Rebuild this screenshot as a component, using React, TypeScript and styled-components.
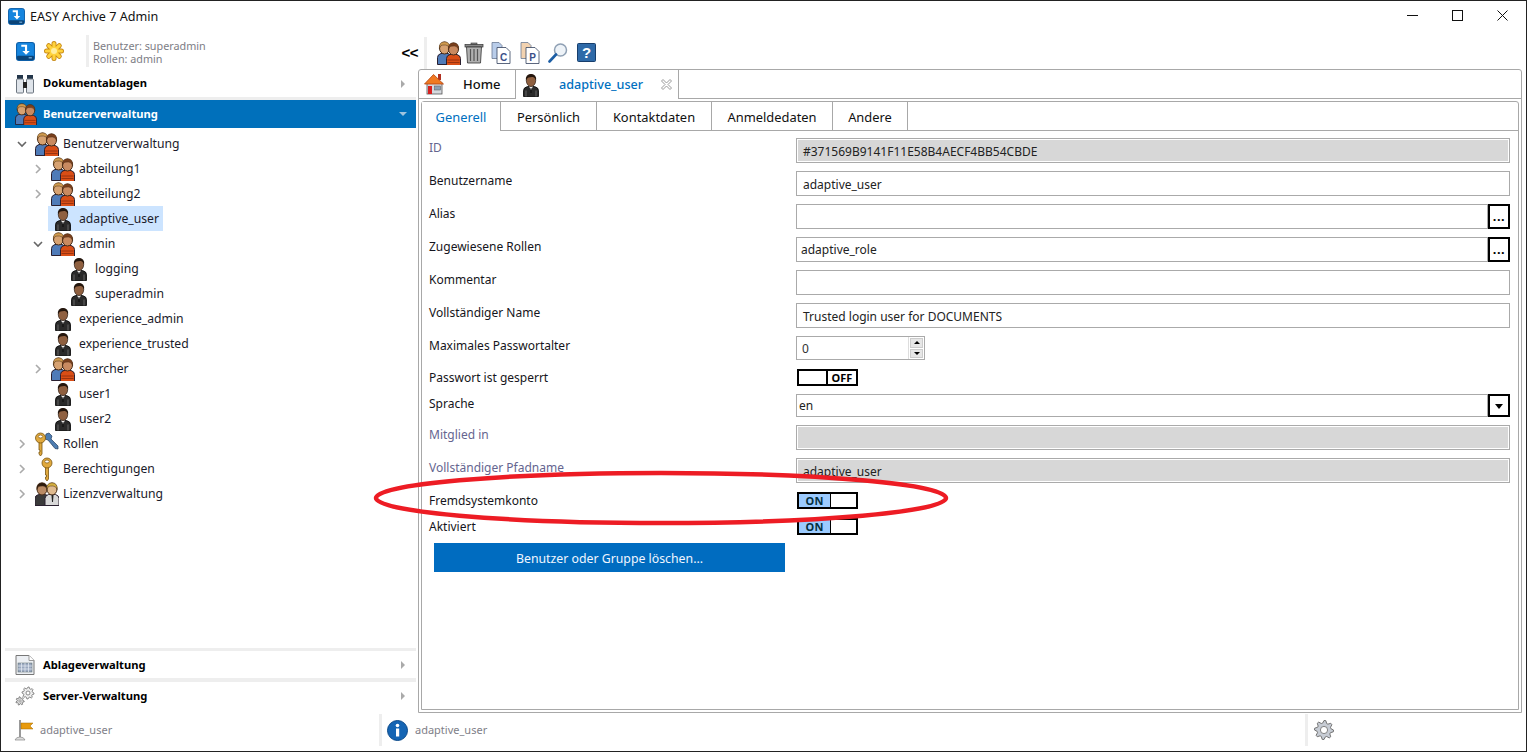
import React from 'react';
import styled, { createGlobalStyle } from 'styled-components';

const Global = createGlobalStyle`
  html, body { margin: 0; padding: 0; background: #fff; }
  body { font-family: "Noto Sans", "Liberation Sans", sans-serif; font-size: 12.5px; color: #000; overflow: hidden; }
  * { box-sizing: border-box; }
`;

const Win = styled.div`
  width: 1527px; height: 752px; display: flex; flex-direction: column;
  border: 1px solid #222; position: relative; background: #fff;
`;
const TitleBar = styled.div`
  height: 31px; display: flex; align-items: center; padding-left: 7px; flex: none;
`;
const TitleText = styled.span`font-size: 12.6px; margin-left: 5px; margin-top: -1px; color: #111;`;
const WinButtons = styled.div`margin-left: auto; display: flex; align-items: center; margin-top: -2px; padding-right: 1px;`;
const WinButton = styled.button`
  width: 45px; height: 24px; border: 0; background: none; padding: 0; display: flex; align-items: center; justify-content: center;
`;
const Content = styled.div`flex: 1; display: flex; min-height: 0;`;
const Sidebar = styled.aside`width: 417px; flex: none; display: flex; flex-direction: column; padding: 0 2px 4px 4px;`;
const SideHeader = styled.div`height: 38px; display: flex; align-items: center; flex: none; padding-left: 11px; margin-right: -2px;`;
const Divider = styled.div`width: 3px; height: 32px; background: #eee; margin: 0 4px 0 22px;`;
const UserInfo = styled.div`font-size: 10.8px; line-height: 13px; color: #7d7d85; padding-top: 1px;`;
const Collapse = styled.span`margin-left: auto; font-weight: 700; font-size: 15px; letter-spacing: -.5px; color: #000; font-family: "Liberation Sans", sans-serif; margin-top: 2px;`;
const Acc = styled.div<{ $active?: boolean; $h: number }>`
  height: ${p => p.$h}px; flex: none; display: flex; align-items: center; padding: 0 7px 0 10px;
  background: ${p => (p.$active ? '#0070bb' : '#fff')};
  color: ${p => (p.$active ? '#fff' : '#000')};
`;
const AccLabel = styled.span<{ $ml?: number; $up?: boolean }>`
  font-weight: 700; font-size: 11.2px; margin-left: ${p => p.$ml ?? 8}px; flex: 1; ${p => p.$up && 'margin-top: -2px;'}
`;
const Gap = styled.div<{ $h: number }>`height: ${p => p.$h}px; background: #eee; flex: none;`;
const TriRight = styled.span`width: 0; height: 0; border-left: 4px solid #aaa; border-top: 4px solid transparent; border-bottom: 4px solid transparent; margin-right: 4px;`;
const TriDown = styled.span`width: 0; height: 0; border-top: 4px solid #9fc4de; border-left: 4px solid transparent; border-right: 4px solid transparent; margin-right: 2px;`;
const Tree = styled.div`flex: 1; padding-top: 3px; margin-left: -4px;`;
const TreeRow = styled.div<{ $level: number }>`
  height: 25px; display: flex; align-items: center; padding-left: ${p => 13 + p.$level * 16}px;
`;
const Toggler = styled.span`width: 18px; flex: none; display: flex; align-items: center; padding-left: 3px;`;
const TreeItem = styled.div<{ $sel?: boolean }>`
  height: 25px; display: flex; align-items: center; gap: 4px; padding: 0 4px 0 3px;
  background: ${p => (p.$sel ? '#cce4ff' : 'transparent')}; color: #1a1a2a; font-size: 12.2px;
`;
const Main = styled.main`flex: 1; min-width: 0; display: flex; flex-direction: column; padding-right: 4px;`;
const Toolbar = styled.div`height: 37px; flex: none; display: flex; align-items: center; padding-left: 6px; padding-top: 4px;`;
const ToolSep = styled.div`width: 3px; height: 32px; background: #eee; margin-right: 9px;`;
const ToolBtn = styled.span<{ $w: number }>`width: ${p => p.$w}px; flex: none; display: flex; justify-content: center;`;
const Outer = styled.div`flex: 1; display: flex; flex-direction: column; border: 1px solid #a8a8a8; border-radius: 3px 3px 0 0; min-height: 0;`;
const OuterTabs = styled.div`height: 29px; display: flex; flex: none; border-bottom: 1px solid #a8a8a8;`;
const OuterTab = styled.div<{ $w: number; $active?: boolean }>`
  width: ${p => p.$w}px; height: ${p => (p.$active ? 29 : 28)}px; display: flex; align-items: center; position: relative;
  border-right: 1px solid #a8a8a8; ${p => p.$active && 'border-left: 1px solid #a8a8a8; background: #fff; margin-left: -1px;'}
  color: ${p => (p.$active ? '#0070c0' : '#111')}; font-size: ${p => (p.$active ? 12.6 : 13)}px;
`;
const TabIcon = styled.span<{ $l: number; $w: number }>`margin-left: ${p => p.$l}px; width: ${p => p.$w}px; display: flex; justify-content: center; flex: none;`;
const TabText = styled.span<{ $l: number }>`margin-left: ${p => p.$l}px; font-weight: 500;`;
const CloseMark = styled.span`position: absolute; right: 6px; top: 9px; line-height: 0;`;
const Inner = styled.div`flex: 1; margin: 2px; border: 1px solid #a8a8a8; border-radius: 3px 3px 0 0; display: flex; flex-direction: column; min-height: 0;`;
const InnerTabs = styled.div`height: 29px; display: flex; flex: none; border-bottom: 1px solid #a8a8a8;`;
const InnerTab = styled.div<{ $w: number; $active?: boolean }>`
  width: ${p => p.$w}px; height: ${p => (p.$active ? 29 : 28)}px; display: flex; align-items: center; justify-content: center;
  border-right: 1px solid #a8a8a8; background: #fff; font-size: 12.9px; padding-top: 1px;
  color: ${p => (p.$active ? '#0070c0' : '#111')};
`;
const Form = styled.div`padding: 7px 8px 0 7px; display: flex; flex-direction: column;`;
const Row = styled.div<{ $h: number }>`height: ${p => p.$h}px; display: flex; flex: none;`;
const Label = styled.div<{ $muted?: boolean; $flush?: boolean }>`
  width: 367px; flex: none; font-size: 12px; line-height: 18px; padding-top: ${p => (p.$flush ? 0 : 1)}px; color: ${p => (p.$muted ? '#65658f' : '#151520')};
`;
const Field = styled.div<{ $disabled?: boolean; $pad?: number; $dy?: number }>`
  flex: 1; height: 25px; display: flex; align-items: center; border: 1px solid #aaa;
  padding: ${p => Math.max(p.$dy ?? 2, 0)}px 0 ${p => Math.max(-(p.$dy ?? 2), 0)}px ${p => p.$pad ?? 6}px;
  font-size: 12px; color: #222; background: ${p => (p.$disabled ? '#d7d7d7' : '#fff')};
  ${p => p.$disabled && 'box-shadow: inset 0 0 0 1px #fff;'}
`;
const Dots = styled.button`
  width: 22px; height: 25px; flex: none; border: 2px solid #000; background: #fff; padding: 0; font: 700 13px "Liberation Sans", sans-serif; color: #000; line-height: 1; letter-spacing: .5px;
`;
const SelectField = styled(Field)`height: 23px;`;
const SelectBtn = styled.button`
  width: 22px; height: 23px; flex: none; border: 2px solid #000; background: #fff; padding: 0; display: flex; align-items: center; justify-content: center;
`;
const TriBlack = styled.span`width: 0; height: 0; border-top: 5px solid #000; border-left: 4px solid transparent; border-right: 4px solid transparent; margin-top: 1px;`;
const Spinner = styled.div`width: 129px; height: 24px; border: 1px solid #aaa; display: flex; font-size: 12px;`;
const SpinValue = styled.div`flex: 1; padding-left: 5px; display: flex; align-items: center; color: #333;`;
const SpinBtns = styled.div`width: 16px; display: flex; flex-direction: column; gap: 1px; padding: 1px; background: #fff; border-left: 1px solid #ddd;`;
const SpinBtn = styled.div<{ $up?: boolean }>`
  flex: 1; background: #e6e6e6; border: 1px solid #ccc; display: flex; align-items: center; justify-content: center;
  &::after { content: ''; width: 0; height: 0; border-left: 3px solid transparent; border-right: 3px solid transparent;
    ${p => (p.$up ? 'border-bottom: 3px solid #000;' : 'border-top: 3px solid #000;')} }
`;
const Toggle = styled.div`width: 61px; height: 17px; border: 2px solid #000; display: flex; margin-left: 1px; font: 700 11px/13px "Noto Sans", sans-serif;`;
const ToggleOn = styled.span`width: 32px; background: #9ccbff; border-right: 1px solid #000; text-align: center; color: #04303f; letter-spacing: .3px;`;
const ToggleOff = styled.span`flex: 1; text-align: center;`;
const ToggleBlank = styled.span`width: 29px; border-right: 2px solid #000;`;
const DangerButton = styled.button`
  width: 351px; height: 29px; margin-left: 5px; border: 0; background: #006cc0; color: #f0f6ff; font: 12.3px "Noto Sans", sans-serif; padding: 1px 0 0;
`;
const Status = styled.footer`height: 38px; flex: none; display: flex; align-items: center; font-size: 11px; color: #808088; padding-bottom: 4px;`;
const StatusCell = styled.div<{ $w?: number; $pl: number }>`
  ${p => (p.$w ? `width: ${p.$w}px; flex: none;` : 'flex: 1;')} display: flex; align-items: center; gap: 7px; padding-left: ${p => p.$pl}px;
`;
const StatusText = styled.span`margin-top: -2px;`;
const StatusSep = styled.div`width: 3px; height: 32px; background: #eee; flex: none;`;
const Overlay = styled.svg`position: absolute; left: -1px; top: -1px; pointer-events: none;`;
const Spacer = styled.span`width: 9px; flex: none;`;

type IP = { s?: number };
const gearPath = (cx: number, cy: number, r1: number, r2: number, n: number) => {
  const pts: string[] = [];
  for (let i = 0; i < n * 4; i++) {
    const a = (i / (n * 4)) * Math.PI * 2;
    const r = i % 4 < 2 ? r2 : r1;
    pts.push(`${(cx + r * Math.cos(a)).toFixed(2)} ${(cy + r * Math.sin(a)).toFixed(2)}`);
  }
  return 'M' + pts.join('L') + 'Z';
};

const Logo = ({ s = 18 }: IP) => (
  <svg width={s} height={s} viewBox="0 0 18 18">
    <rect x=".5" y=".5" width="17" height="17" rx="2.5" fill="#1685de" stroke="#0d5fa8" />
    <rect x="1" y="13" width="16" height="4" rx="1" fill="#0b4478" />
    <rect x="12" y="14.5" width="3" height="1" fill="#8fc4ee" />
    <path d="M5 3.5h4.5v6" fill="none" stroke="#fff" strokeWidth="2" />
    <path d="M6 8.5h7l-3.5 3.6z" fill="#fff" />
  </svg>
);
const Star = () => (
  <svg width="20" height="20" viewBox="0 0 20 20">
    <g stroke="#c98a14" strokeWidth="5" strokeLinecap="round">
      <path d="M10 2.5v15M2.5 10h15M4.7 4.7l10.6 10.6M15.3 4.7L4.7 15.3" />
    </g>
    <g stroke="#ffd23c" strokeWidth="3.2" strokeLinecap="round">
      <path d="M10 2.5v15M2.5 10h15M4.7 4.7l10.6 10.6M15.3 4.7L4.7 15.3" />
    </g>
    <circle cx="10" cy="10" r="3" fill="#ffeea0" />
  </svg>
);
const Binoculars = () => (
  <svg width="20" height="20" viewBox="0 0 20 20">
    <rect x="2" y="1" width="6" height="4" fill="#23364a" />
    <rect x="12" y="1" width="6" height="4" fill="#23364a" />
    <rect x="1.5" y="5" width="7" height="14" rx="1" fill="#dfe4ea" stroke="#6d7680" />
    <rect x="11.5" y="5" width="7" height="14" rx="1" fill="#dfe4ea" stroke="#6d7680" />
    <rect x="8" y="8" width="4" height="6" fill="#222" />
  </svg>
);
const Man = ({ x, y, hair, face, body, k = 1 }: { x: number; y: number; hair: string; face: string; body: string; k?: number }) => (
  <g transform={`translate(${x} ${y}) scale(${k})`}>
    <path d="M-.5 23v-7q0-3 3.5-4h7q3.5 1 3.5 4v7z" fill={body} stroke="#2a2030" strokeWidth="1" />
    <ellipse cx="6.5" cy="6.5" rx="5" ry="6" fill={face} stroke="#4a2e18" strokeWidth="1" />
    <path d="M1.4 7Q.8 .3 6.5 .3T11.6 7Q10.6 3.6 7.5 3.5T3 4z" fill={hair} stroke="#4a2e18" strokeWidth=".5" />
  </g>
);
const Group = ({ s = 24 }: IP) => (
  <svg width={s} height={s} viewBox="0 0 24 24">
    <Man x={1} y={0.5} hair="#cf9a4e" face="#d7a271" body="#4f7bb8" />
    <Man x={10} y={1.5} hair="#7a3f1c" face="#c98a60" body="#d94e16" k={1} />
    <path d="M10.5 19h12M10.5 21.5h12" stroke="#8c2c0c" strokeWidth=".8" />
  </svg>
);
const UserIcon = ({ s = 24 }: IP) => (
  <svg width={s} height={s} viewBox="0 0 24 24">
    <path d="M4.5 23.5v-6q0-3 4-4h7q4 1 4 4v6z" fill="#2a2a2a" stroke="#000" strokeWidth=".8" />
    <path d="M10 13.2l2 4 2-4z" fill="#eee" />
    <path d="M11.6 15h.8v5h-.8z" fill="#000" />
    <path d="M7 17.5v6M17 17.5v6" stroke="#777" strokeWidth=".8" />
    <ellipse cx="12" cy="7.5" rx="4.7" ry="6" fill="#8f6040" stroke="#2a1a10" strokeWidth=".7" />
    <path d="M7 7.5Q6.2 1 12 1t5 6.5q-1-3.3-3-3.5t-4.5 0.4Q8 5 7 7.5z" fill="#24160d" />
  </svg>
);
const KeyShape = ({ x, y, c = '#e0a93e' }: { x: number; y: number; c?: string }) => (
  <g transform={`translate(${x} ${y})`}>
    <path d="M3.5 10h3v12l-1.5 2-1.5-2v-2h1v-2h-1z" fill={c} stroke="#7a5510" strokeWidth=".8" />
    <ellipse cx="5" cy="6" rx="5" ry="5" fill={c} stroke="#7a5510" strokeWidth=".8" />
    <ellipse cx="5" cy="4.5" rx="2.2" ry="1.5" fill="#fff" stroke="#7a5510" strokeWidth=".7" />
  </g>
);
const Keys = () => (
  <svg width="24" height="24" viewBox="0 0 24 24">
    <path d="M11 2l3-1 3 3-1 3 7 7v3l-3-.5L13 8l-3-1z" fill="#4d7cb0" stroke="#1f3c60" strokeWidth=".7" />
    <KeyShape x={0.5} y={0} />
  </svg>
);
const KeyIcon = () => (
  <svg width="24" height="24" viewBox="0 0 24 24"><KeyShape x={7} y={0} /></svg>
);
const License = () => (
  <svg width="24" height="24" viewBox="0 0 24 24">
    <Man x={0.5} y={0.5} hair="#2c1a0c" face="#b98a64" body="#3a3a3a" />
    <Man x={10.5} y={0.5} hair="#d4b040" face="#e0bb90" body="#d8d8d8" />
    <path d="M16.5 13h2l-.5 7h-1z" fill="#222" />
  </svg>
);
const TableDoc = () => (
  <svg width="20" height="20" viewBox="0 0 20 20">
    <path d="M1 .5h13l5 5v14H1z" fill="#eceff3" stroke="#777" />
    <path d="M14 .5v5h5" fill="#fff" stroke="#999" />
    <rect x="3" y="8" width="14" height="9" fill="#9aa8bf" stroke="#566" strokeWidth=".5" />
    <path d="M3 11h14M3 14h14M6.5 8v9M10 8v9M13.5 8v9" stroke="#e8eef6" strokeWidth=".7" />
  </svg>
);
const Gears = () => (
  <svg width="20" height="20" viewBox="0 0 20 20">
    <path d={gearPath(13, 7, 4.5, 6, 8)} fill="#eee" stroke="#707070" strokeWidth=".8" />
    <circle cx="13" cy="7" r="2" fill="#fff" stroke="#707070" strokeWidth=".8" />
    <path d={gearPath(5, 15, 2.8, 4.2, 7)} fill="#ddd" stroke="#707070" strokeWidth=".8" />
    <circle cx="5" cy="15" r="1.1" fill="#fff" stroke="#707070" strokeWidth=".6" />
  </svg>
);
const Flag = () => (
  <svg width="19" height="22" viewBox="0 0 19 22">
    <rect x="5" y="1" width="2" height="17" fill="#999" />
    <path d="M7 4h12l-3 3 3 3H7z" fill="#e89a0c" stroke="#a06a00" strokeWidth=".5" />
    <path d="M1 21q1-3 5-3t5 3z" fill="#ddd" stroke="#888" strokeWidth=".7" />
  </svg>
);
const Info = () => (
  <svg width="21" height="21" viewBox="0 0 21 21">
    <circle cx="10.5" cy="10.5" r="10" fill="#1565b4" stroke="#0c4a8a" />
    <circle cx="10.5" cy="5.5" r="1.8" fill="#fff" />
    <rect x="9" y="8.5" width="3.2" height="8" fill="#fff" />
  </svg>
);
const BigGear = () => (
  <svg width="20" height="20" viewBox="0 0 20 20">
    <path d={gearPath(10, 10, 7, 9.5, 8)} fill="#c7ccd4" stroke="#666" strokeWidth=".9" />
    <circle cx="10" cy="10" r="3.6" fill="#fff" stroke="#777" strokeWidth=".9" />
  </svg>
);
const Trash = () => (
  <svg width="20" height="22" viewBox="0 0 20 22">
    <rect x="1" y="2.5" width="18" height="2.5" fill="#8a8a8a" stroke="#333" strokeWidth=".7" />
    <rect x="7" y="1" width="6" height="1.5" fill="#888" stroke="#333" strokeWidth=".6" />
    <path d="M2.5 5h15l-1 16h-13z" fill="#b0b0b0" stroke="#333" strokeWidth=".8" />
    <path d="M6.5 7v12M10 7v12M13.5 7v12" stroke="#555" strokeWidth="1.2" />
  </svg>
);
const DocLetter = ({ l, back }: { l: string; back: string }) => (
  <svg width="20" height="22" viewBox="0 0 20 22">
    <path d="M1 .5h7l3 3v13H1z" fill={back} stroke="#6a7a94" strokeWidth=".8" />
    <path d="M6 5.5h6l3 0 4 4v12H6z" fill="#fff" stroke="#33415e" strokeWidth=".8" />
    <text x="12.5" y="19" textAnchor="middle" fontFamily="Liberation Sans, sans-serif" fontWeight="700" fontSize="10" fill="#3a4f88">{l}</text>
  </svg>
);
const Magnifier = () => (
  <svg width="20" height="20" viewBox="0 0 20 20">
    <circle cx="12.5" cy="7" r="6" fill="#eef3f8" stroke="#8fa0b4" strokeWidth="1.5" />
    <path d="M8 11.5L1.5 18.5" stroke="#1c5ea5" strokeWidth="2.6" strokeLinecap="round" />
  </svg>
);
const Help = () => (
  <svg width="19" height="19" viewBox="0 0 19 19">
    <rect x=".5" y=".5" width="18" height="18" rx="1" fill="#2f6aa8" stroke="#173e6c" />
    <text x="9.5" y="15" textAnchor="middle" fontFamily="Liberation Sans, sans-serif" fontWeight="700" fontSize="15" fill="#fff">?</text>
  </svg>
);
const Home = () => (
  <svg width="20" height="22" viewBox="0 0 20 22">
    <rect x="14" y="1" width="3" height="6" fill="#b03020" />
    <rect x="3" y="10" width="15" height="11" fill="#d5d9de" stroke="#555" strokeWidth=".8" />
    <path d="M0.5 11L9.5 1.5 19.5 11z" fill="#f07a22" stroke="#b4430f" strokeWidth=".8" />
    <rect x="4" y="13" width="4" height="8" fill="#d82020" />
    <rect x="10.5" y="13" width="6" height="4" fill="#8ca0b6" stroke="#555" strokeWidth=".5" />
  </svg>
);
const Chevron = ({ open }: { open?: boolean }) => (
  <svg width="10" height="10" viewBox="0 0 10 10" style={{ display: 'block' }}>
    <path d={open ? 'M1 3l4 4 4-4' : 'M3 1l4 4-4 4'} fill="none" stroke={open ? '#666' : '#aaa'} strokeWidth="1.6" />
  </svg>
);

type Node = { label: string; level: number; icon: React.ReactNode; toggle?: 'open' | 'closed'; sel?: boolean };
const nodes: Node[] = [
  { label: 'Benutzerverwaltung', level: 0, icon: <Group />, toggle: 'open' },
  { label: 'abteilung1', level: 1, icon: <Group />, toggle: 'closed' },
  { label: 'abteilung2', level: 1, icon: <Group />, toggle: 'closed' },
  { label: 'adaptive_user', level: 1, icon: <UserIcon />, sel: true },
  { label: 'admin', level: 1, icon: <Group />, toggle: 'open' },
  { label: 'logging', level: 2, icon: <UserIcon /> },
  { label: 'superadmin', level: 2, icon: <UserIcon /> },
  { label: 'experience_admin', level: 1, icon: <UserIcon /> },
  { label: 'experience_trusted', level: 1, icon: <UserIcon /> },
  { label: 'searcher', level: 1, icon: <Group />, toggle: 'closed' },
  { label: 'user1', level: 1, icon: <UserIcon /> },
  { label: 'user2', level: 1, icon: <UserIcon /> },
  { label: 'Rollen', level: 0, icon: <Keys />, toggle: 'closed' },
  { label: 'Berechtigungen', level: 0, icon: <KeyIcon />, toggle: 'closed' },
  { label: 'Lizenzverwaltung', level: 0, icon: <License />, toggle: 'closed' },
];

const innerTabs = [
  { t: 'Generell', w: 79, active: true },
  { t: 'Persönlich', w: 96 },
  { t: 'Kontaktdaten', w: 115 },
  { t: 'Anmeldedaten', w: 121 },
  { t: 'Andere', w: 75 },
];

const OnSwitch = () => (
  <Toggle><ToggleOn>ON</ToggleOn></Toggle>
);

export default function App() {
  return (
    <>
      <Global />
      <Win>
        <TitleBar>
          <Logo s={17} />
          <TitleText>EASY Archive 7 Admin</TitleText>
          <WinButtons>
            <WinButton aria-label="min">
              <svg width="11" height="11" viewBox="0 0 11 11"><path d="M0 5.5h11" stroke="#111" /></svg>
            </WinButton>
            <WinButton aria-label="max">
              <svg width="11" height="11" viewBox="0 0 11 11"><rect x=".5" y=".5" width="10" height="10" fill="none" stroke="#111" /></svg>
            </WinButton>
            <WinButton aria-label="close">
              <svg width="11" height="11" viewBox="0 0 11 11"><path d="M.5.5l10 10M10.5.5l-10 10" stroke="#111" /></svg>
            </WinButton>
          </WinButtons>
        </TitleBar>
        <Content>
          <Sidebar>
            <SideHeader>
              <Logo s={19} />
              <Spacer />
              <Star />
              <Divider />
              <UserInfo>
                <div>Benutzer: superadmin</div>
                <div>Rollen: admin</div>
              </UserInfo>
              <Collapse>&lt;&lt;</Collapse>
            </SideHeader>
            <Acc $h={27}><Binoculars /><AccLabel $up>Dokumentablagen</AccLabel><TriRight /></Acc>
            <Gap $h={3} />
            <Acc $h={28} $active><Group s={22} /><AccLabel $ml={6} $up>Benutzerverwaltung</AccLabel><TriDown /></Acc>
            <Tree>
              {nodes.map(n => (
                <TreeRow key={n.label} $level={n.level}>
                  <Toggler>{n.toggle && <Chevron open={n.toggle === 'open'} />}</Toggler>
                  <TreeItem $sel={n.sel}>{n.icon}<span>{n.label}</span></TreeItem>
                </TreeRow>
              ))}
            </Tree>
            <Gap $h={3} />
            <Acc $h={27}><TableDoc /><AccLabel>Ablageverwaltung</AccLabel><TriRight /></Acc>
            <Gap $h={4} />
            <Acc $h={27}><Gears /><AccLabel>Server-Verwaltung</AccLabel><TriRight /></Acc>
          </Sidebar>
          <Main>
            <Toolbar>
              <ToolSep />
              <ToolBtn $w={26}><Group /></ToolBtn>
              <ToolBtn $w={24}><Trash /></ToolBtn>
              <ToolBtn $w={30}><DocLetter l="C" back="#b9cdea" /></ToolBtn>
              <ToolBtn $w={28}><DocLetter l="P" back="#f2d2b0" /></ToolBtn>
              <ToolBtn $w={27}><Magnifier /></ToolBtn>
              <ToolBtn $w={30}><Help /></ToolBtn>
            </Toolbar>
            <Outer>
              <OuterTabs>
                <OuterTab $w={97}>
                  <TabIcon $l={5} $w={20}><Home /></TabIcon>
                  <TabText $l={19}>Home</TabText>
                </OuterTab>
                <OuterTab $w={164} $active>
                  <TabIcon $l={3} $w={24}><UserIcon /></TabIcon>
                  <TabText $l={16}>adaptive_user</TabText>
                  <CloseMark>
                    <svg width="11" height="11" viewBox="0 0 11 11"><path d="M2 .5L5.5 4 9 .5l1.5 1.5L7 5.5 10.500 9 9 10.500 5.500 7 2 10.500.5 9 4 5.500.5 2z" stroke="#999" fill="#fff" /></svg>
                  </CloseMark>
                </OuterTab>
              </OuterTabs>
              <Inner>
                <InnerTabs>
                  {innerTabs.map(t => (
                    <InnerTab key={t.t} $w={t.w} $active={t.active}>{t.t}</InnerTab>
                  ))}
                </InnerTabs>
                <Form>
                  <Row $h={33}><Label $muted>ID</Label><Field $disabled>#371569B9141F11E58B4AECF4BB54CBDE</Field></Row>
                  <Row $h={33}><Label>Benutzername</Label><Field>adaptive_user</Field></Row>
                  <Row $h={33}><Label>Alias</Label><Field /><Dots>...</Dots></Row>
                  <Row $h={33}><Label>Zugewiesene Rollen</Label><Field $pad={4} $dy={-1}>adaptive_role</Field><Dots>...</Dots></Row>
                  <Row $h={33}><Label>Kommentar</Label><Field /></Row>
                  <Row $h={33}><Label>Vollständiger Name</Label><Field>Trusted login user for DOCUMENTS</Field></Row>
                  <Row $h={33}>
                    <Label>Maximales Passwortalter</Label>
                    <Spinner>
                      <SpinValue>0</SpinValue>
                      <SpinBtns><SpinBtn $up /><SpinBtn /></SpinBtns>
                    </Spinner>
                  </Row>
                  <Row $h={25}><Label $flush>Passwort ist gesperrt</Label><Toggle><ToggleBlank /><ToggleOff>OFF</ToggleOff></Toggle></Row>
                  <Row $h={31}>
                    <Label>Sprache</Label>
                    <SelectField $pad={2} $dy={0}>en</SelectField>
                    <SelectBtn aria-label="open"><TriBlack /></SelectBtn>
                  </Row>
                  <Row $h={33}><Label $muted>Mitglied in</Label><Field $disabled /></Row>
                  <Row $h={34}><Label $muted>Vollständiger Pfadname</Label><Field $disabled>adaptive_user</Field></Row>
                  <Row $h={26}><Label $flush>Fremdsystemkonto</Label><OnSwitch /></Row>
                  <Row $h={25}><Label $flush>Aktiviert</Label><OnSwitch /></Row>
                  <DangerButton>Benutzer oder Gruppe löschen...</DangerButton>
                </Form>
              </Inner>
            </Outer>
          </Main>
        </Content>
        <Status>
          <StatusCell $w={378} $pl={13}><Flag /><StatusText>adaptive_user</StatusText></StatusCell>
          <StatusSep />
          <StatusCell $w={923} $pl={5}><Info /><StatusText>adaptive_user</StatusText></StatusCell>
          <StatusSep />
          <StatusCell $pl={6}><BigGear /></StatusCell>
        </Status>
        <Overlay width="1527" height="752" viewBox="0 0 1527 752">
          <ellipse cx="661" cy="498" rx="285" ry="25" fill="none" stroke="#ed1c24" strokeWidth="4.5" />
        </Overlay>
      </Win>
    </>
  );
}
